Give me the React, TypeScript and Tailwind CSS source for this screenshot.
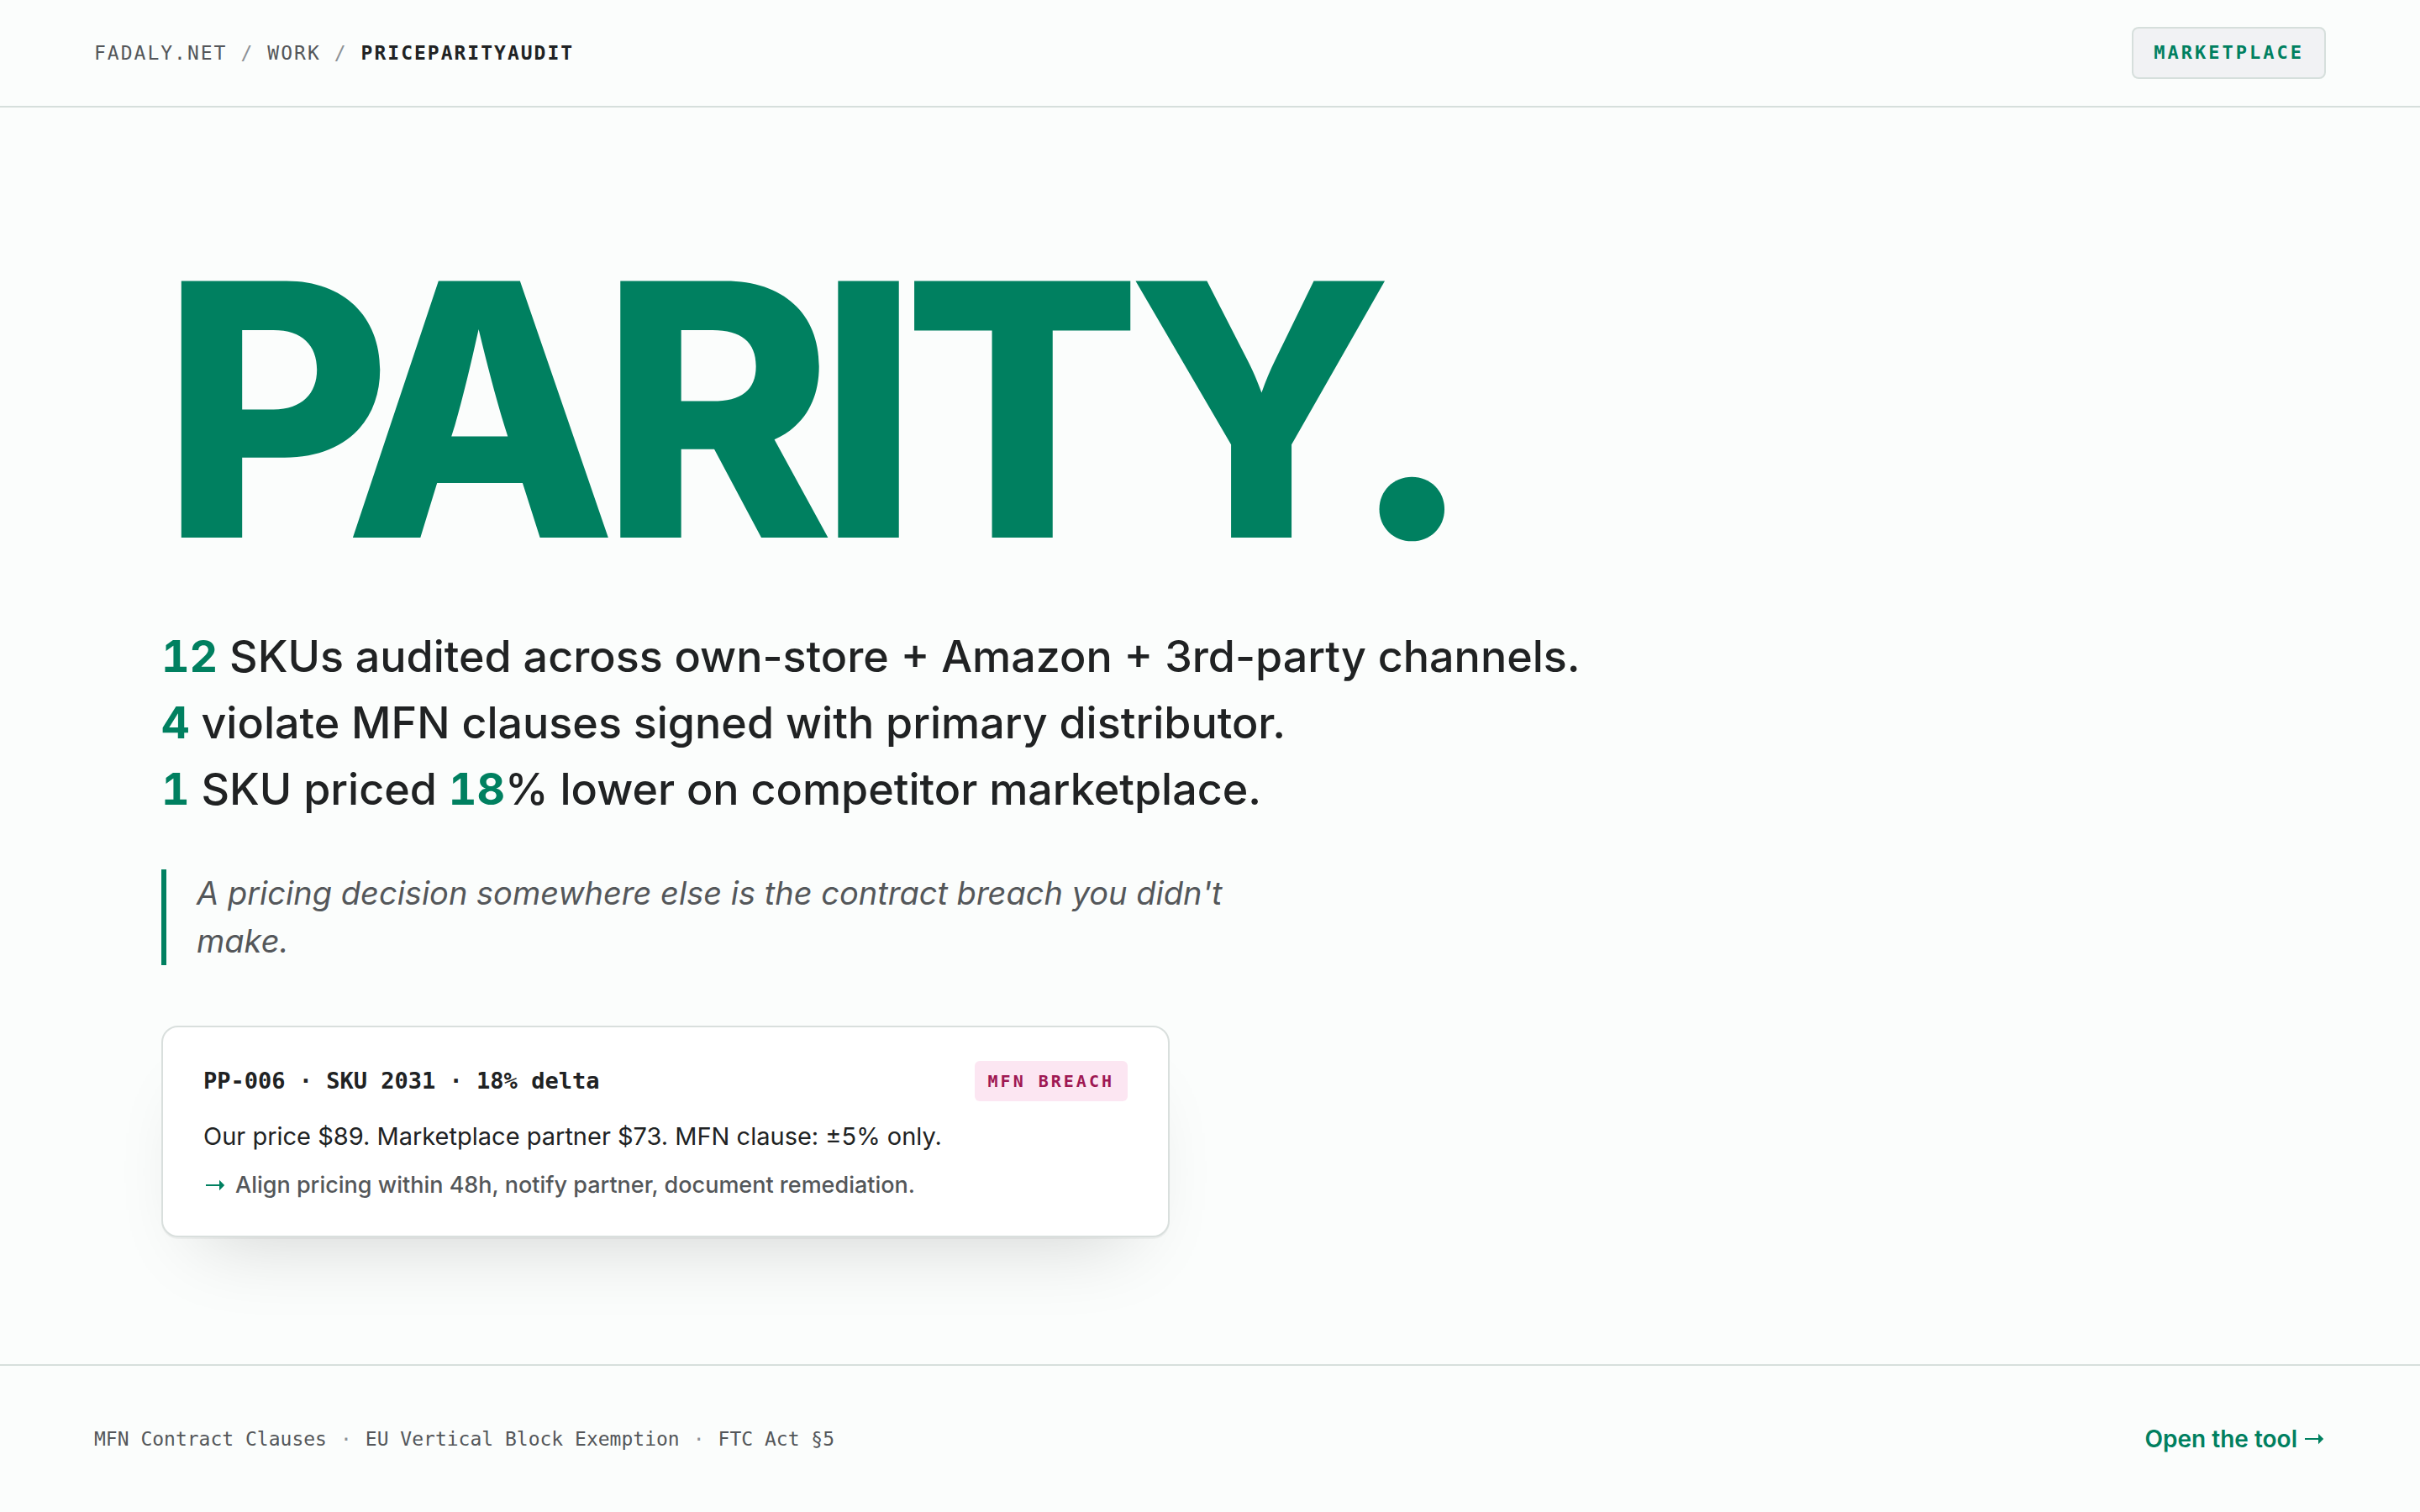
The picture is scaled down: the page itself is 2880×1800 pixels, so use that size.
import { Fragment } from 'react';

const references = ['MFN Contract Clauses', 'EU Vertical Block Exemption', 'FTC Act §5'];

function Num({ children }: { children: React.ReactNode }) {
  return <strong className="font-bold text-[#008060] tabular-nums">{children}</strong>;
}

function Arrow() {
  return (
    <svg viewBox="0 0 28 14" className="h-3.5 w-7 shrink-0 text-[#008060]" fill="currentColor" aria-hidden="true">
      <path d="M3 6H19V.7L25.2 7L19 13.3V8H3Z" />
    </svg>
  );
}

function Header() {
  return (
    <header className="flex items-center justify-between border-b-2 border-[#d6dfdc] px-28 py-8 font-['DejaVu_Sans_Mono',monospace]">
      <nav aria-label="Breadcrumb" className="flex gap-4 text-[23px] leading-8 tracking-[2px] text-[#54575a]">
        <a href="#home">FADALY.NET</a>
        <span className="text-[#8c9196]">/</span>
        <a href="#work">WORK</a>
        <span className="text-[#8c9196]">/</span>
        <span className="font-semibold text-[#202223]">PRICEPARITYAUDIT</span>
      </nav>
      <span className="rounded-lg border-2 border-[#d6dfdc] bg-[#f1f2f4] px-6 py-3 text-[22px] leading-[34px] font-semibold tracking-[3px] text-[#008060]">
        MARKETPLACE
      </span>
    </header>
  );
}

function AuditCard() {
  return (
    <article className="max-w-[1200px] rounded-[20px] border-2 border-[#d9dfdd] bg-white px-12 py-10 shadow-[0_2px_0_rgba(0,0,0,0.04),0_48px_96px_-48px_rgba(0,0,0,0.18)]">
      <div className="mb-5 flex items-center justify-between font-['DejaVu_Sans_Mono',monospace]">
        <h2 className="text-[27px] leading-10 font-semibold">PP-006 · SKU 2031 · 18% delta</h2>
        <span className="rounded-md bg-[#fce6f2] px-4 py-2 text-[20px] leading-8 font-bold tracking-[3px] text-[#9f1853]">
          MFN BREACH
        </span>
      </div>
      <p className="text-[29px] leading-[44px]">Our price $89. Marketplace partner $73. MFN clause: ±5% only.</p>
      <p className="mt-4 flex items-center gap-2.5 text-[27px] leading-10 font-medium text-[#54575a]">
        <Arrow />
        Align pricing within 48h, notify partner, document remediation.
      </p>
    </article>
  );
}

function Footer() {
  return (
    <footer className="flex items-center justify-between border-t-2 border-[#d6dfdc] px-28 py-16">
      <p className="flex gap-4 font-['DejaVu_Sans_Mono',monospace] text-[23px] leading-8 text-[#54575a]">
        {references.map((reference, i) => (
          <Fragment key={reference}>
            {i > 0 && <span className="text-[#8c9196]">·</span>}
            <span>{reference}</span>
          </Fragment>
        ))}
      </p>
      <a href="#tool" className="flex items-center gap-1.5 text-[28px] leading-[46px] font-semibold text-[#008060]">
        Open the tool
        <Arrow />
      </a>
    </footer>
  );
}

export default function App() {
  return (
    <div className="flex min-h-screen flex-col bg-[#fbfdfc] font-[Inter,sans-serif] text-[#202223]">
      <Header />
      <main className="flex flex-1 flex-col justify-center px-48">
        <h1 className="text-[420px] leading-[414px] font-extrabold tracking-[-19px] text-[#008060]">PARITY.</h1>
        <p className="mt-12 text-[52px] leading-[79px] font-medium">
          <Num>12</Num> SKUs audited across own-store + Amazon + 3rd-party channels.
          <br />
          <Num>4</Num> violate MFN clauses signed with primary distributor.
          <br />
          <Num>1</Num> SKU priced <Num>18</Num>% lower on competitor marketplace.
        </p>
        <blockquote className="mt-14 mb-18 max-w-[1320px] border-l-6 border-[#008060] pl-9 text-[38px] leading-[57px] text-[#54575a] italic">
          A pricing decision somewhere else is the contract breach you didn't make.
        </blockquote>
        <AuditCard />
      </main>
      <Footer />
    </div>
  );
}
